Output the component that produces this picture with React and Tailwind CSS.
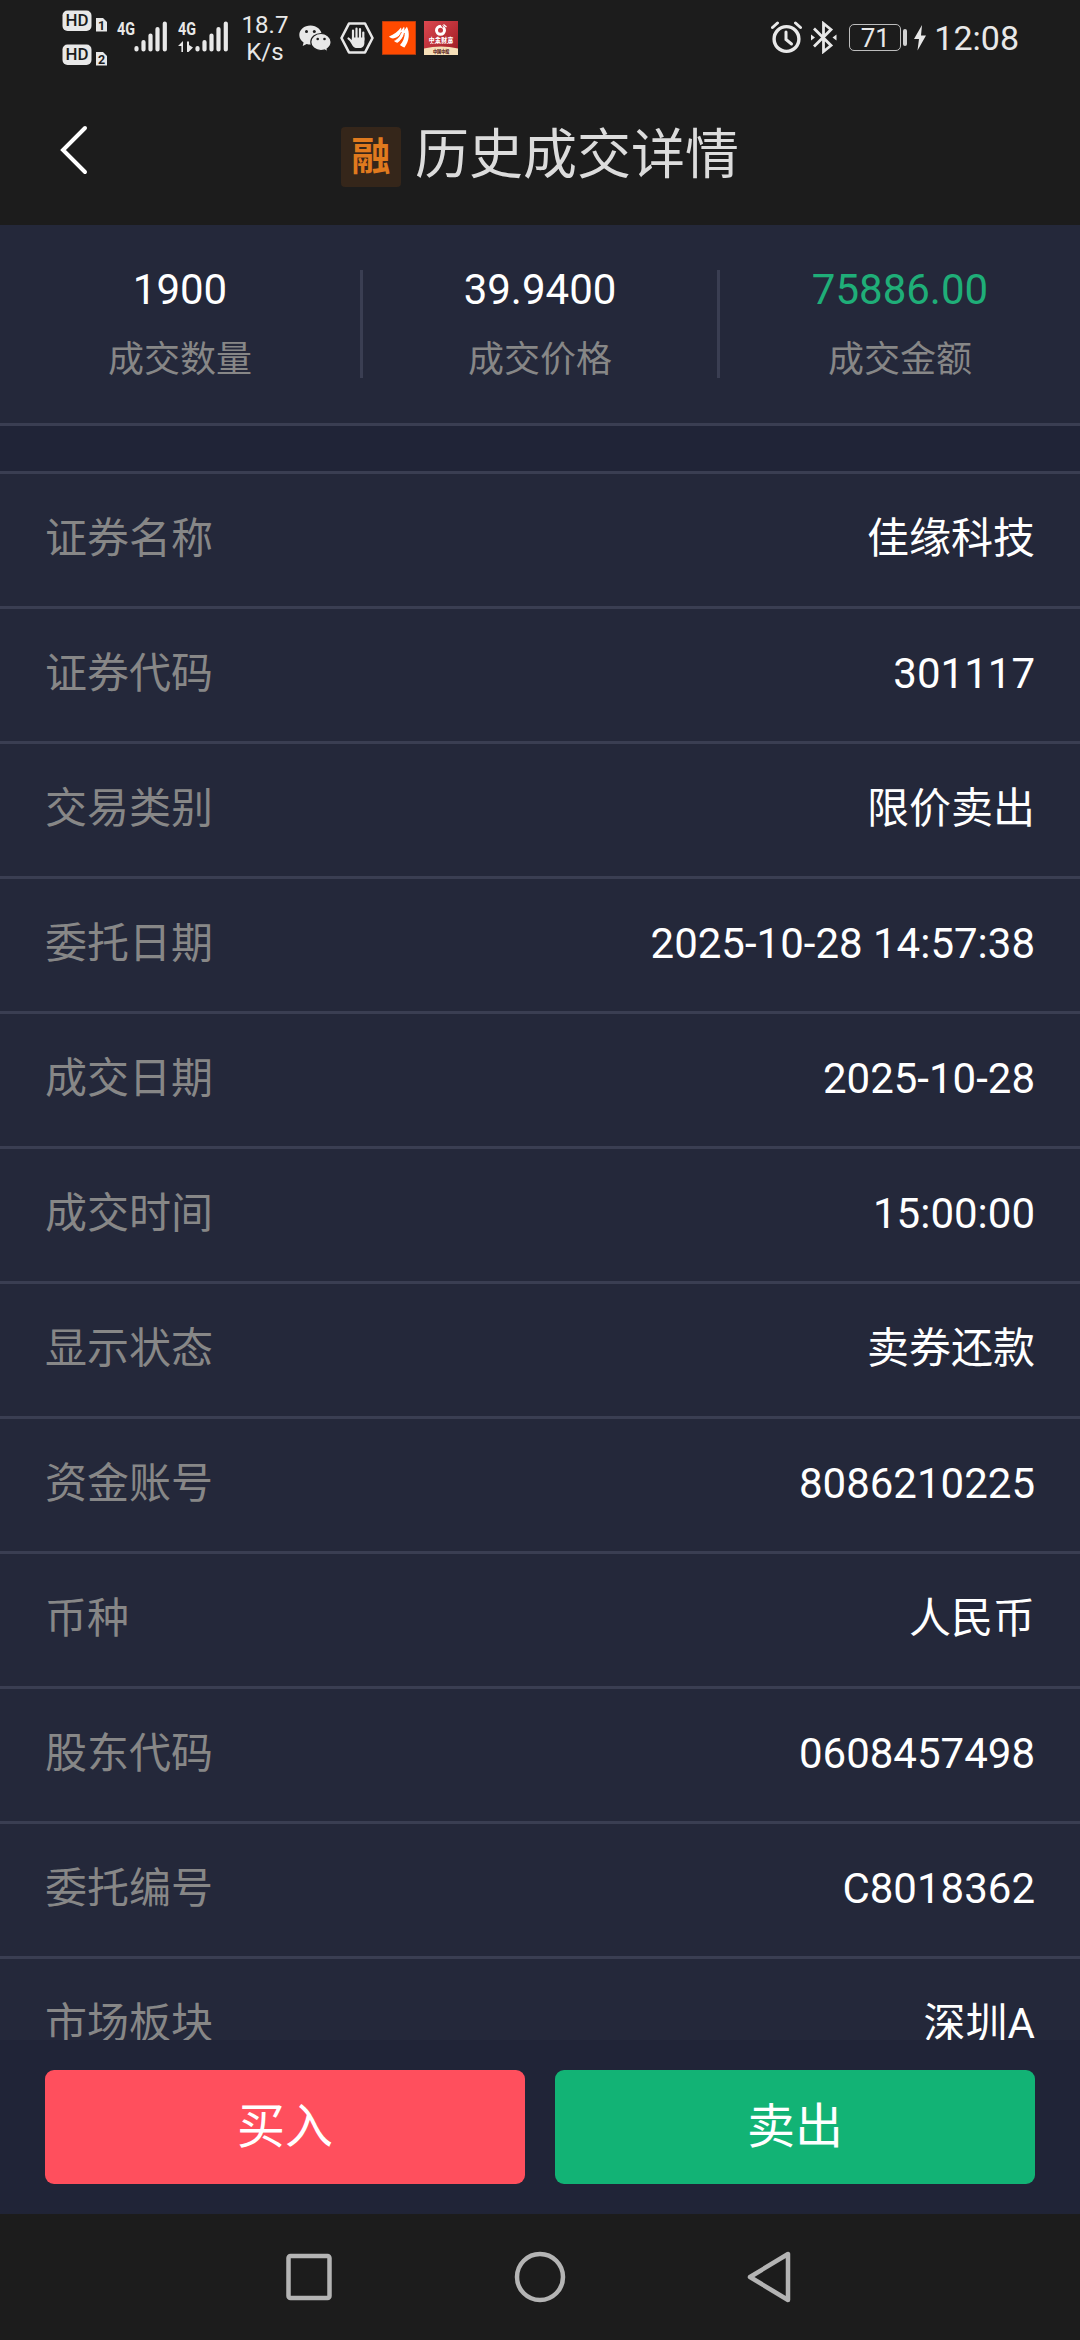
import React from 'react';

const summary = [
  { value: '1900', label: '成交数量', color: 'text-white', border: '' },
  { value: '39.9400', label: '成交价格', color: 'text-white', border: 'border-x-[3px] border-[#3a3e52]' },
  { value: '75886.00', label: '成交金额', color: 'text-[#1fae78]', border: '' },
];

const rows = [
  ['证券名称', '佳缘科技'],
  ['证券代码', '301117'],
  ['交易类别', '限价卖出'],
  ['委托日期', '2025-10-28 14:57:38'],
  ['成交日期', '2025-10-28'],
  ['成交时间', '15:00:00'],
  ['显示状态', '卖券还款'],
  ['资金账号', '8086210225'],
  ['币种', '人民币'],
  ['股东代码', '0608457498'],
  ['委托编号', 'C8018362'],
  ['市场板块', '深圳A'],
];

function HdBadge({ sim }) {
  return (
    <svg className="overflow-visible" width="46" height="22" viewBox="0 0 46 22">
      <rect x="0.5" y="0.5" width="29" height="20.5" rx="5" fill="#e8e8e8" />
      <text x="3.5" y="16.4" fontSize="17" fontWeight="500" textLength="23" lengthAdjust="spacingAndGlyphs" fill="#1c1c1c">HD</text>
      <path d="M34 8h7l4 4v9.5h-11z" fill="#e8e8e8" />
      <text x="36" y="19.6" fontSize="12.5" fontWeight="700" fill="#1c1c1c">{sim}</text>
    </svg>
  );
}

function Signal({ data }) {
  return (
    <svg className="overflow-visible" width="51" height="32" viewBox="0 0 51 32">
      <text x="0" y="14" fontSize="18.5" fontWeight="700" textLength="18" lengthAdjust="spacingAndGlyphs" fill="#e8e8e8">4G</text>
      {data && <path d="M0 25l5-5v11H3.4v-6zM9 20.500h2v3.500l4 2.500-4.500 4.500H9z" fill="#e8e8e8" />}
      <g stroke="#e8e8e8" strokeWidth="4.2" strokeLinecap="round">
        <path d="M19.500 27v1.500M26.500 21v7.500M33.500 14.500v14M40.500 8v20.500M47.800 2.600v25.900" />
      </g>
    </svg>
  );
}

function WechatIcon() {
  return (
    <svg width="33" height="28" viewBox="0 0 33 28">
      <path d="M11.500 0.500C5.200 0.500 0.300 4.700 0.300 10c0 3.200 1.700 5.700 4.300 7.500L3.700 21l4-2.100c1.300.4 2.500.5 3.800.5 6.200 0 11.200-4.200 11.200-9.400S17.700.5 11.500.5z" fill="#e8e8e8" />
      <path d="M22 8.500c-5.700 0-10.200 3.800-10.200 8.500s4.500 8.500 10.200 8.500c1.200 0 2.300-.2 3.400-.5l3.600 1.900-.9-3c2.500-1.600 4-4 4-6.900 0-4.700-4.500-8.500-10.100-8.500z" fill="#e8e8e8" stroke="#1c1c1c" strokeWidth="1.200" />
      <g fill="#1c1c1c">
        <circle cx="7.500" cy="6.500" r="1.500" />
        <circle cx="15.300" cy="6.500" r="1.500" />
        <circle cx="18.700" cy="14" r="1.300" />
        <circle cx="25.500" cy="14" r="1.300" />
      </g>
    </svg>
  );
}

function HandIcon() {
  return (
    <svg width="34" height="32" viewBox="0 0 34 32">
      <path d="M9 1.500h16L32.500 16 25 30.500H9L1.500 16z" fill="none" stroke="#e8e8e8" strokeWidth="2.600" strokeLinejoin="round" />
      <path d="M13 18V8.500M16.500 17V6.500M20 17V7M23.300 18V10.500M13 20.500L8.500 16.500" stroke="#e8e8e8" strokeWidth="2.200" strokeLinecap="round" />
      <path d="M11.900 15.500h12.500v5.500c0 3-2 5-4.800 5h-2.500c-2 0-3.500-.8-4.500-2.300L9.800 19l2 .5z" fill="#e8e8e8" />
    </svg>
  );
}

function OrangeAppIcon() {
  return (
    <svg width="34" height="34" viewBox="0 0 34 34">
      <rect width="34" height="34" fill="#a53a12" />
      <rect x="0.700" y="0.700" width="32.600" height="32.300" fill="#ff4a00" />
      <path d="M7 15.500C12 13.500 16 10.500 19 6.500c.6 1.500.3 2.500-.5 3.800l3.500-4.500c.8 1.400.5 2.800-.3 4.200l3.200-4.200c3 5.500 2.600 14-2.400 20.700-2.200-.6-3.500-1.600-4.500-2.500 3-3.300 4.500-7.200 4.700-11-1.800 3.500-4.200 6.500-7.200 8.800-1.500-.4-2.800-1-3.500-2 2.800-1.500 5-3.600 6.500-6-2.500 2-5 3.200-7.500 3.700-1.800-.3-3.300-1-4-2z" fill="#fff" />
      <path d="M19.500 11c-2 4-4 7-7 8.500M22.500 12c-1.300 4.800-3.300 8.500-5.700 11" stroke="#ff4a00" strokeWidth="0.800" fill="none" />
    </svg>
  );
}

function RedAppIcon() {
  return (
    <svg width="34" height="34" viewBox="0 0 34 34">
      <defs>
        <linearGradient id="redBg" x1="0" y1="0" x2="1" y2="1">
          <stop offset="0" stopColor="#dc4850" />
          <stop offset="1" stopColor="#9c1a22" />
        </linearGradient>
      </defs>
      <rect width="34" height="34" fill="url(#redBg)" />
      {/* ring with a flame opening at the top */}
      <circle cx="16.500" cy="9.300" r="4" fill="none" stroke="#fff" strokeWidth="3" />
      <path d="M16 2l3 4.500" stroke="#c43a42" strokeWidth="1.200" />
      <path d="M19.500 3.500l3 2.500" stroke="#fff" strokeWidth="1.200" />
      <text x="4.800" y="20.800" fontSize="5.800" fontWeight="900" textLength="24.500" fill="#fff">中金财富</text>
      <path d="M6 22.500h22" stroke="#f3c9c9" strokeWidth="0.900" strokeDasharray="1.200 .5" />
      <path d="M0 27.500Q17 23.500 34 27.500V34H0z" fill="#f6dfb8" />
      <text x="9" y="31.500" fontSize="4.200" fontWeight="900" textLength="16.500" fill="#57221a">中国中投</text>
    </svg>
  );
}

function AlarmIcon() {
  return (
    <svg width="32" height="33" viewBox="0 0 32 33" fill="none" stroke="#e8e8e8">
      <circle cx="15.500" cy="18" r="12.400" strokeWidth="3.400" />
      <path d="M1.500 6.500L6.500 2M29.500 6.500L24.500 2" strokeWidth="3" strokeLinecap="round" />
      <path d="M15 11v7.500l5.500 4.500" strokeWidth="3" strokeLinecap="round" />
    </svg>
  );
}

function BluetoothIcon() {
  return (
    <svg width="26" height="33" viewBox="0 0 26 33" fill="none" stroke="#e8e8e8">
      <path d="M3 7.500L20 24.500l-7.500 6V2.500l7.500 6L3 25.500" strokeWidth="2.800" />
      <path d="M0 13.500l4 3-4 3zM25.500 13.500l-4 3 4 3z" fill="#e8e8e8" stroke="none" />
    </svg>
  );
}

function StatusBar() {
  return (
    <div className="h-[75px] flex items-start text-[#e8e8e8]">
      <div className="ml-[62px] mt-[10px] flex flex-col gap-3">
        <HdBadge sim="1" />
        <HdBadge sim="2" />
      </div>
      <div className="ml-[9px] mt-[21px] flex gap-[10px]">
        <Signal />
        <Signal data />
      </div>
      <div className="ml-[11px] mt-[12px] w-[50px] text-center text-[24px] leading-[27px]">
        <div>18.7</div>
        <div>K/s</div>
      </div>
      <div className="ml-[9px] mt-[25px]"><WechatIcon /></div>
      <div className="ml-[8px] mt-[22px]"><HandIcon /></div>
      <div className="ml-[8px] mt-[21px]"><OrangeAppIcon /></div>
      <div className="ml-[8px] mt-[21px]"><RedAppIcon /></div>

      <div className="ml-auto mr-[61px] flex items-start">
        <div className="mt-[21px]"><AlarmIcon /></div>
        <div className="ml-[8px] mt-[21px]"><BluetoothIcon /></div>
        <div className="ml-[12px] mt-[24px] h-[27px] w-[52px] rounded-[5px] border-[1.5px] border-[#bdbdbd] text-center text-[26px] leading-[26px]">71</div>
        <div className="ml-[2px] mt-[29px] h-[17px] w-[4px] rounded-full bg-[#d0d0d0]" />
        <svg className="ml-[7px] mt-[25px]" width="12" height="26" viewBox="0 0 12 26">
          <path d="M8 0L0 14h5L3.500 25.500 12 10.500H7z" fill="#e8e8e8" />
        </svg>
        <div className="ml-[8px] mt-[18px] text-[34px] leading-[40px]">12:08</div>
      </div>
    </div>
  );
}

function Header() {
  return (
    <div className="h-[150px] flex items-start">
      <svg className="ml-[60px] mt-[50px]" width="28" height="50" viewBox="0 0 28 50" fill="none">
        <path d="M25 3L3 25l22 22" stroke="#fff" strokeWidth="4" strokeLinecap="round" />
      </svg>
      <div className="ml-[253px] mt-[52px] size-[60px] rounded-[4px] bg-[#35261a] text-center text-[39px] leading-[60px] font-bold text-[#e07a1e]">融</div>
      <h1 className="ml-[14px] mt-[43px] text-[54px] leading-[76px] text-[#dcdcdc]">历史成交详情</h1>
    </div>
  );
}

function Summary() {
  return (
    <div className="h-[201px] grid grid-cols-3 items-start border-b-[3px] border-[#3a3e52] bg-[#24283a] pt-[45px]">
      {summary.map((item) => (
        <div key={item.label} className={`h-[108px] flex flex-col items-center ${item.border}`}>
          <div className={`${item.color} text-[42px] leading-[40px]`}>{item.value}</div>
          <div className="mt-[24px] text-[36px] leading-[52px] text-[#878787]">{item.label}</div>
        </div>
      ))}
    </div>
  );
}

export default function App() {
  return (
    <div className="w-[1080px] h-[2340px] flex flex-col overflow-hidden bg-[#1c1c1c] font-[Roboto,'Noto_Sans_CJK_SC',sans-serif]">
      <StatusBar />
      <Header />
      <Summary />

      <div className="h-[1614px] overflow-hidden bg-[#202437] pt-[45px]">
        <div className="border-t-[3px] border-[#3a3e52]">
          {rows.map(([label, value]) => (
            <div key={label} className="h-[135px] flex items-center justify-between border-b-[3px] border-[#3a3e52] bg-[#24283a] px-[45px] pb-[2px] text-[42px] leading-[60px]">
              <span className="text-[#878787]">{label}</span>
              <span className="text-white">{value}</span>
            </div>
          ))}
        </div>
      </div>

      <div className="h-[174px] flex gap-[30px] bg-[#202437] px-[45px] py-[30px] text-[48px] leading-[108px] text-white">
        <button className="flex-1 rounded-[9px] bg-[#ff4f5d]">买入</button>
        <button className="flex-1 rounded-[9px] bg-[#12b375]">卖出</button>
      </div>

      <div className="flex-1 flex items-center justify-center">
        <svg width="508" height="52" viewBox="0 0 508 52" fill="none" stroke="#b4b4b4" strokeWidth="4.500" strokeLinejoin="round">
          <rect x="2.500" y="5" width="41" height="42" rx="2" />
          <circle cx="254" cy="26" r="23" />
          <path d="M502 3v46L464 26z" />
        </svg>
      </div>
    </div>
  );
}
